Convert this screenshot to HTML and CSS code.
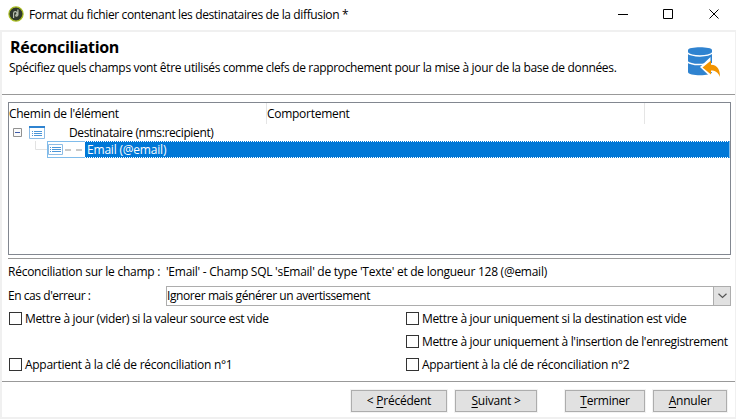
FILE: index.html
```
<!DOCTYPE html>
<html lang="fr">
<head>
<meta charset="utf-8">
<title>Format du fichier</title>
<link rel="stylesheet" href="styles.css">
</head>
<body>
<div class="window">
  <header class="titlebar">
    <svg class="app-icon" width="16" height="16" viewBox="0 0 16 16"><circle cx="8" cy="8" r="7.1" fill="#30382d" stroke="#a9bd20" stroke-width="1.2"/><path d="M5.6 12V7.2a1.7 1.7 0 1 1 1.7 1.9M9.9 3.6v5.2c0 1.6-2 1.700-2.400.5" fill="none" stroke="#b9bfb0" stroke-width="1.2"/></svg>
    <span class="title">Format du fichier contenant les destinataires de la diffusion *</span>
    <svg class="controls" width="104" height="12" viewBox="0 0 104 12" fill="none" stroke="#000" stroke-width="1"><path d="M0 6.5h10M45.5 1.5h9v9h-9zM91.500 1.500l9 9M100.500 1.500l-9 9"/></svg>
  </header>
  <main class="dialog">
    <section class="intro">
      <div>
        <h1>Réconciliation</h1>
        <p class="subtitle">Spécifiez quels champs vont être utilisés comme clefs de rapprochement pour la mise à jour de la base de données.</p>
      </div>
      <svg class="db-icon" width="34" height="34" viewBox="0 0 34 34"><path d="M1 5C1 1.300 25 1.300 25 5V27C25 31.300 1 31.300 1 27Z" fill="#2f83d0"/><path d="M0 7.500C5 12 21 12 26 7.500M0 16.500C5 20.500 18 20.500 22 17" fill="none" stroke="#fff" stroke-width="1.500"/><path d="M13 22 23.500 12V18C31 18 34 22 34 34H31C29 28 27 27 23.500 27V32Z" fill="#fff"/><path d="M15.500 22.500 24 15.500V19.700C31 20 33 25 33 32C31 27 28 25.500 24 25.500V29.500Z" fill="#f29400"/></svg>
    </section>
    <section class="tree">
      <div class="tree-head">
        <div class="col path"><span class="t-path">Chemin de l'élément</span></div>
        <div class="col behavior"><span class="t-behavior">Comportement</span></div>
      </div>
      <div class="row root">
        <svg width="9" height="9" viewBox="0 0 9 9"><path d="M.5.5h8v8h-8z" fill="#fafafa" stroke="#919191"/><path d="M2 4.500h5" stroke="#3f5ba9"/></svg>
        <svg class="schema" width="16" height="13" viewBox="0 0 16 13"><path d="M.5.5h15v12H.5z" fill="#fff" stroke="#8dbce5"/><path d="M0 1h16" stroke="#2f83d0" stroke-width="2"/><path d="M3 5.500h1M5 5.500h8M3 7.500h1M5 7.500h8M3 9.500h1M5 9.500h8" stroke="#4b96d8"/></svg>
        <span class="t-root">Destinataire (nms:recipient)</span>
      </div>
      <div class="row child">
        <svg class="branch" width="12" height="17" viewBox="0 0 12 17"><path d="M.5 0v8.500H12" fill="none" stroke="#e2e2e2"/></svg>
        <div class="focus">
          <svg width="15" height="11" viewBox="0 0 15 11"><path d="M.5.5h14v10H.5z" fill="#fff" stroke="#8dbce5"/><path d="M2 3.500h1M4 3.500h9M2 5.500h1M4 5.500h9M2 7.500h1M4 7.500h9" stroke="#4b96d8"/></svg>
          <svg class="dashes" width="17" height="2" viewBox="0 0 17 2"><path d="M0 1h6M11 1h6" stroke="#b8b8b8" stroke-width="1.500"/></svg>
          <div class="selected"><span class="t-child">Email (@email)</span></div>
          <svg class="focus-ring" width="683" height="17"><rect x=".5" y=".5" width="682" height="16" fill="none" stroke="#0078d7" stroke-dasharray="1 1"/><path d="M38 .5h644M38 16.500h644" stroke="#fff" stroke-dasharray="1 1"/></svg>
        </div>
      </div>
    </section>
    <section class="details">
      <div class="field">
        <span class="label t-rec">Réconciliation sur le champ :</span>
        <span class="value t-value">'Email' - Champ SQL 'sEmail' de type 'Texte' et de longueur 128 (@email)</span>
      </div>
      <div class="field error-field">
        <span class="label t-err">En cas d'erreur :</span>
        <div class="select"><span class="t-select">Ignorer mais générer un avertissement</span><i><svg width="9" height="6" viewBox="0 0 9 6"><path d="M.5.8 4.500 4.500 8.500.8" fill="none" stroke="#555" stroke-width="1.200"/></svg></i></div>
      </div>
      <div class="options">
        <label><i></i><span class="t-o1">Mettre à jour (vider) si la valeur source est vide</span></label>
        <label><i></i><span class="t-o2">Mettre à jour uniquement si la destination est vide</span></label>
        <b></b>
        <label><i></i><span class="t-o3">Mettre à jour uniquement à l'insertion de l'enregistrement</span></label>
        <label><i></i><span class="t-o4">Appartient à la clé de réconciliation n°1</span></label>
        <label><i></i><span class="t-o5">Appartient à la clé de réconciliation n°2</span></label>
      </div>
    </section>
    <footer>
      <button class="prev"><span>&lt; <u>P</u>récédent</span></button>
      <button class="next"><span><u>S</u>uivant &gt;</span></button>
      <button class="finish"><span><u>T</u>erminer</span></button>
      <button class="cancel"><span><u>A</u>nnuler</span></button>
    </footer>
  </main>
</div>
</body>
</html>
```
FILE: styles.css
```
* { box-sizing: border-box; }
body { margin: 0; background: #fff; color: #000; font: 12px/16px "Open Sans", "Noto Sans", sans-serif; }
span, p, h1 { white-space: nowrap; }
svg { display: block; flex: none; }
.window { width: 736px; height: 419px; }
.titlebar { height: 30px; display: flex; align-items: center; padding: 0 17px 2px 8px; }
.title { margin: 2px 0 0 5px; letter-spacing: -.37px; }
.controls { margin-left: auto; margin-right: -3px; }
.dialog { height: 389px; border: solid #f0f0f0; border-width: 2px 1px 2px 2px; }
.intro { height: 63px; display: flex; justify-content: space-between; border-bottom: 1px solid #999; padding: 4px 14px 0 7px; }
h1 { margin: 1px 0 0 1px; font-size: 16px; line-height: 20px; letter-spacing: -.32px; }
.subtitle { margin: 3px 0 0; letter-spacing: -.34px; }
.db-icon { margin-top: 9px; }
.tree { margin: 7px 4px 0 6px; height: 153px; border: 1px solid #828790; }
.tree-head { height: 21px; display: flex; line-height: 21px; }
.col { border-right: 1px solid #e5e5e5; }
.path { width: 258px; }
.behavior { width: 378px; }
.row { height: 17px; line-height: 17px; display: flex; align-items: center; }
.root { padding-left: 4px; }
.schema { margin: 0 24px 0 7px; }
.child { padding-left: 26px; padding-right: 1px; }
.focus { position: relative; flex: 1; height: 17px; display: flex; align-items: center; padding-left: 1px; }
.dashes { margin: 0 3px 0 2px; }
.selected { flex: 1; height: 17px; background: #0078d7; color: #fff; padding-left: 2px; }
.focus-ring { position: absolute; inset: 0; }
.details { margin: 3px 5px 0 6px; height: 123px; border-top: 1px solid #999; padding-top: 5px; }
.field { display: flex; height: 16px; }
.label { width: 158px; flex: none; }
.error-field { margin-top: 6px; height: 20px; align-items: center; }
.select { flex: 1; height: 20px; margin-right: -1px; border: 1px solid #adadad; display: flex; justify-content: space-between; line-height: 18px; }
.select i { width: 17px; display: grid; place-items: center; background: #e1e1e1; border-left: 1px solid #adadad; }
.options { display: grid; grid-template-columns: 397px 1fr; grid-auto-rows: 23px; margin-top: 1px; }
.options label { display: flex; align-items: center; padding-left: 1px; }
.options i { width: 13px; height: 13px; border: 1px solid #333; margin-right: 3px; flex: none; }
.t-path, .t-behavior { letter-spacing: -.28px; }
.t-root { letter-spacing: -.37px; }
.t-child { letter-spacing: -.2px; }
.t-rec { letter-spacing: -.25px; }
.t-value { letter-spacing: -.26px; }
.t-err { letter-spacing: -.45px; }
.t-select { letter-spacing: -.4px; }
.t-o1, .t-o2, .t-o3 { letter-spacing: -.34px; }
.t-o4, .t-o5 { letter-spacing: -.28px; }
footer { height: 36px; border-top: 1px solid #999; display: flex; justify-content: flex-end; gap: 8px; padding: 8px 8px 0 0; }
button { height: 22px; border: 1px solid #adadad; background: #e1e1e1; color: #000; font: inherit; padding: 0; box-shadow: 0 0 0 1px #f3f3f3; letter-spacing: -.25px; }
u { text-underline-offset: 2px; }
.prev { width: 96px; }
.next { width: 82px; }
.finish { width: 80px; margin-left: 20px; }
.cancel { width: 74px; }
```
